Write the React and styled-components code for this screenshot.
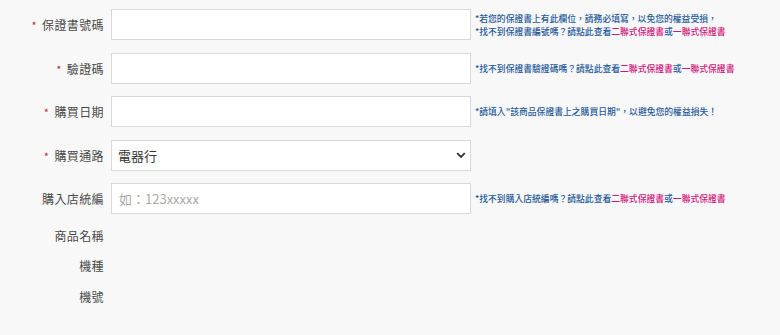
import React from "react";
import styled, { createGlobalStyle } from "styled-components";

const Global = createGlobalStyle`
  html, body { margin: 0; padding: 0; background: #f8f8f8; }
  body { font-family: "Noto Sans CJK TC", "Noto Sans", sans-serif; }
`;

const Form = styled.div`
  display: grid;
  grid-template-columns: 104px 360px auto;
  column-gap: 7px;
  row-gap: 12.5px;
  padding-top: 9px;
  align-items: center;
`;

const Label = styled.div`
  grid-column: 1;
  text-align: right;
  font-size: 12px;
  letter-spacing: 0.4px;
  color: #4a4a4a;
  height: ${(p) => (p.$short ? "18px" : "31px")};
  line-height: ${(p) => (p.$short ? "18px" : "31px")};
  white-space: nowrap;
`;

const Star = styled.span`
  color: #c0303a;
  margin-right: 5px;
  font-size: 11px;
`;

const Input = styled.input`
  box-sizing: border-box;
  width: 360px;
  height: 31px;
  border: 1px solid #d8d8d8;
  background: #fff;
  padding: 0 7px;
  font-size: 13px;
  font-family: "Noto Sans CJK TC", sans-serif;
  color: #333;
  outline: none;
  &::placeholder { color: #aaa; }
`;

const SelectBox = styled.div`
  position: relative;
  width: 360px;
  height: 31px;
`;

const Select = styled.select`
  box-sizing: border-box;
  appearance: none;
  width: 100%;
  height: 100%;
  border: 1px solid #d8d8d8;
  background: #fff;
  padding: 0 6px;
  font-size: 13px;
  font-family: "Noto Sans CJK TC", sans-serif;
  color: #333;
  outline: none;
`;

const Chevron = styled.svg`
  position: absolute;
  right: 5px;
  top: 12px;
  pointer-events: none;
`;

const Hint = styled.div`
  grid-column: 3;
  margin-left: -3px;
  font-size: 8.8px;
  line-height: 13px;
  color: #1f5a98;
  white-space: nowrap;
  font-weight: 500;
`;

const Pink = styled.span`
  color: #d0167a;
`;

const Find = ({ what }) => (
  <>
    *找不到{what}嗎？請點此查看<Pink>二聯式保證書</Pink>或<Pink>一聯式保證書</Pink>
  </>
);

export default function App() {
  return (
    <>
      <Global />
      <Form>
        <Label><Star>*</Star>保證書號碼</Label>
        <Input />
        <Hint>
          *若您的保證書上有此欄位，請務必填寫，以免您的權益受損，
          <br />
          <Find what="保證書編號" />
        </Hint>

        <Label><Star>*</Star>驗證碼</Label>
        <Input />
        <Hint><Find what="保證書驗證碼" /></Hint>

        <Label><Star>*</Star>購買日期</Label>
        <Input />
        <Hint>*請填入"該商品保證書上之購買日期"，以避免您的權益損失！</Hint>

        <Label><Star>*</Star>購買通路</Label>
        <SelectBox>
          <Select defaultValue="電器行">
            <option>電器行</option>
          </Select>
          <Chevron width="10" height="7" viewBox="0 0 10 7">
            <path d="M1.2 1.2 L5 5 L8.8 1.2" fill="none" stroke="#333" strokeWidth="1.8" />
          </Chevron>
        </SelectBox>
        <Hint />

        <Label>購入店統編</Label>
        <Input placeholder="如：123xxxxx" />
        <Hint><Find what="購入店統編" /></Hint>

        <Label $short>商品名稱</Label>
        <Label $short>機種</Label>
        <Label $short>機號</Label>
      </Form>
    </>
  );
}
